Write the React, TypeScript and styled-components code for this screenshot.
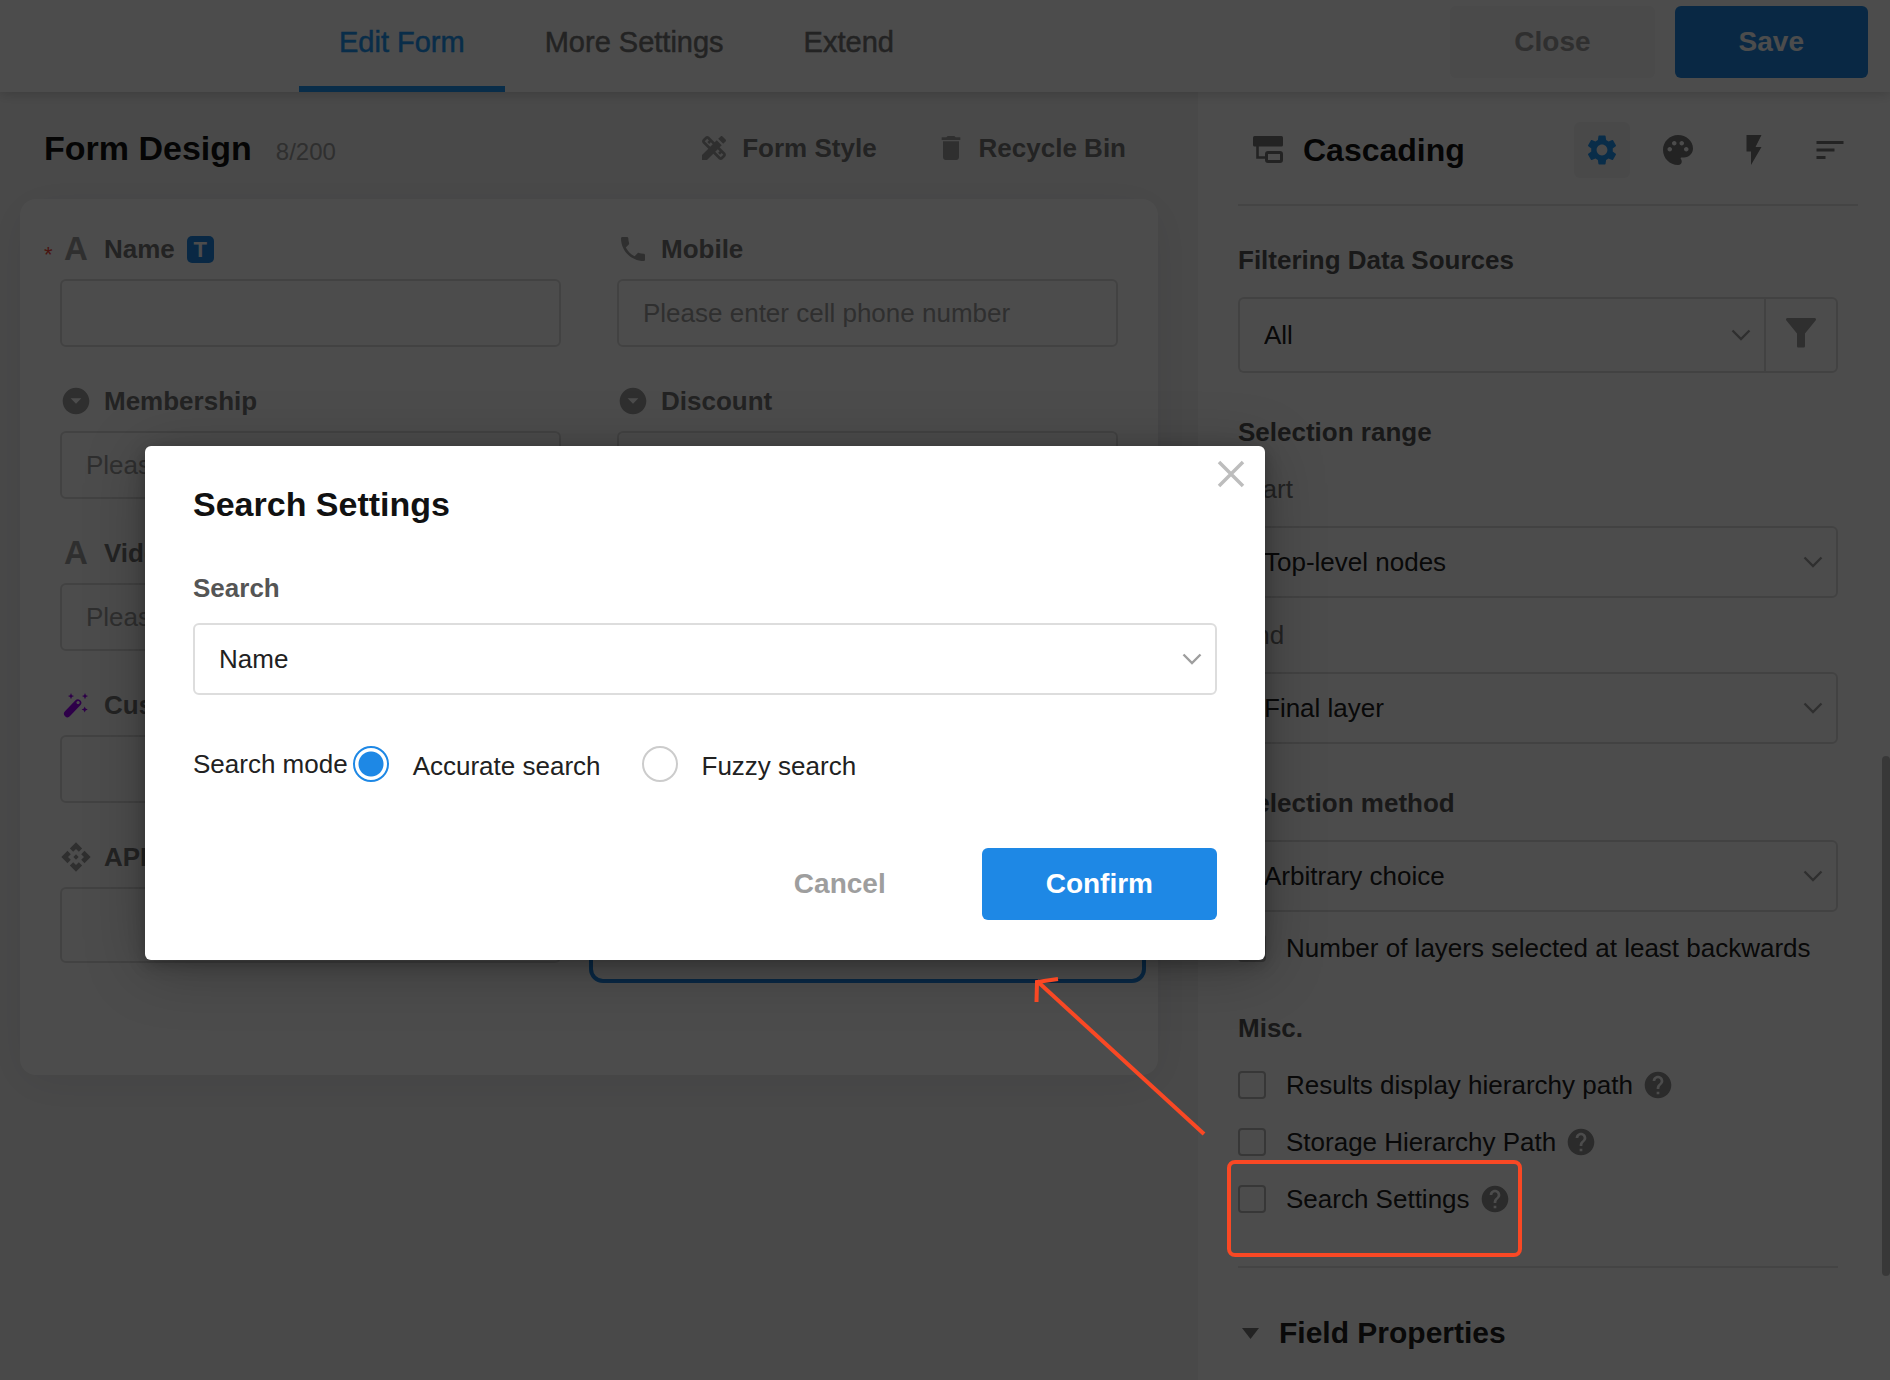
import React, { useState } from "react";
import styled, { createGlobalStyle, css } from "styled-components";
import {
  MdApi,
  MdArrowDropDownCircle,
  MdDelete,
  MdDesignServices,
  MdFlashOn,
  MdHelp,
  MdPalette,
  MdPhone,
  MdSettings,
  MdSort,
} from "react-icons/md";

const c = {
  blue: "#2196f3",
  primary: "#1e88e5",
  ink: "#111111",
  text: "#212121",
  section: "#555555",
  label: "#757575",
  muted: "#9e9e9e",
  border: "#dddddd",
  soft: "#f5f5f5",
  mark: "#f94824",
};

const GlobalStyle = createGlobalStyle`
  *, *::before, *::after { box-sizing: border-box; }
  body {
    margin: 0;
    background: #fff;
    color: ${c.text};
    font-family: "Liberation Sans", Arial, Helvetica, sans-serif;
    font-size: 26px;
    line-height: 32px;
  }
  button, input, select { font: inherit; color: inherit; margin: 0; }
  button { border: 0; background: none; padding: 0; cursor: pointer; }
  h1, h2, h3 { margin: 0; }
  svg { display: block; flex: none; }
`;

const Screen = styled.div`
  position: relative;
  display: flex;
  flex-direction: column;
  height: 100vh;
  overflow: hidden;
`;

/* Top bar */

const TopBar = styled.header`
  display: flex;
  flex: none;
  justify-content: space-between;
  align-items: flex-start;
  height: 92px;
  padding-right: 22px;
  background: #fff;
  box-shadow: 0 2px 12px rgba(0, 0, 0, 0.18);
  z-index: 1;
`;

const Tabs = styled.nav`
  display: flex;
  height: 100%;
  margin-left: 299px;
`;

const Tab = styled.a<{ $active?: boolean }>`
  display: flex;
  align-items: center;
  padding: 0 40px 2px;
  border-bottom: 6px solid ${(p) => (p.$active ? c.blue : "transparent")};
  color: ${(p) => (p.$active ? c.blue : c.label)};
  font-size: 29px;
  font-weight: 500;
  -webkit-text-stroke: 0.5px currentColor;
  text-decoration: none;
`;

const ButtonRow = styled.div<{ $gap: number }>`
  display: flex;
  justify-content: flex-end;
  gap: ${(p) => p.$gap}px;
`;

const TopActions = styled(ButtonRow)`
  padding-top: 6px;
`;

const Button = styled.button<{ $kind: "primary" | "soft" | "plain" }>`
  height: 72px;
  padding: 0 64px;
  border-radius: 6px;
  font-size: 28px;
  font-weight: 700;
  color: ${(p) => (p.$kind === "primary" ? "#fff" : c.muted)};
  ${(p) => p.$kind === "primary" && css`background: ${c.primary};`}
  ${(p) => p.$kind === "soft" && css`background: #f7f7f7;`}
`;

/* Form canvas */

const Workspace = styled.div`
  display: flex;
  flex: 1;
  min-height: 0;
`;

const Canvas = styled.main`
  flex: 1;
  min-width: 0;
  padding-right: 40px;
  padding-left: 20px;
  background: ${c.soft};
`;

const CanvasHeader = styled.div`
  display: flex;
  align-items: center;
  justify-content: space-between;
  height: 107px;
  padding: 4px 32px 0 24px;
`;

const TitleGroup = styled.div`
  display: flex;
  align-items: baseline;
  gap: 24px;
`;

const CanvasTitle = styled.h1`
  color: ${c.ink};
  font-size: 34px;
  line-height: 40px;
`;

const Counter = styled.span`
  color: ${c.muted};
  font-size: 24px;
`;

const ToolGroup = styled.div`
  display: flex;
  gap: 58px;
`;

const ToolButton = styled.button`
  display: flex;
  align-items: center;
  gap: 12px;
  color: ${c.label};
  font-weight: 700;
  svg { color: ${c.muted}; }
`;

const FormCard = styled.section`
  display: grid;
  grid-template-columns: 1fr 1fr;
  grid-auto-rows: min-content;
  gap: 24px 56px;
  min-height: 876px;
  padding: 20px 40px 112px;
  border-radius: 16px;
  background: #fff;
  box-shadow: 0 8px 48px rgba(20, 20, 60, 0.08);
`;

const FieldBox = styled.div<{ $column: number }>`
  display: flex;
  flex-direction: column;
  grid-column: ${(p) => p.$column};
`;

const FieldLabel = styled.label`
  position: relative;
  display: flex;
  align-items: center;
  gap: 12px;
  height: 60px;
  color: ${c.label};
  font-weight: 700;
`;

const FieldIcon = styled.span`
  display: flex;
  justify-content: center;
  width: 32px;
  color: ${c.muted};
`;

const LetterIcon = styled.span`
  font-size: 33px;
`;

const Required = styled.span`
  position: absolute;
  top: 20px;
  left: -16px;
  color: #f44336;
  font-size: 22px;
  font-weight: 400;
`;

const TypeBadge = styled.span`
  display: grid;
  place-items: center;
  width: 27px;
  height: 27px;
  border-radius: 5px;
  background: ${c.primary};
  color: #fff;
  font-size: 22px;
  line-height: 27px;
`;

const TextInput = styled.input<{ $tall?: boolean }>`
  width: 100%;
  height: ${(p) => (p.$tall ? 76 : 68)}px;
  padding: 0 24px;
  border: 2px solid ${c.border};
  border-radius: 6px;
  background: #fff;
  outline: 0;
  &::placeholder { color: ${c.muted}; opacity: 1; }
`;

const SelectedCell = styled.div`
  grid-row: 5;
  grid-column: 2;
  margin: 0 -28px -20px;
  border: 4px solid ${c.primary};
  border-radius: 14px;
`;

/* Property panel */

const Panel = styled.aside`
  position: relative;
  flex: none;
  width: 692px;
  padding-left: 40px;
  background: #fff;
`;

const PanelHeader = styled.div`
  display: flex;
  align-items: center;
  justify-content: space-between;
  height: 114px;
  margin-right: 32px;
  padding: 3px 0 0 15px;
  border-bottom: 2px solid #e4e4e4;
`;

const PanelTitle = styled.h2`
  display: flex;
  align-items: center;
  gap: 20px;
  color: ${c.ink};
  font-size: 32px;
  svg { color: ${c.label}; }
`;

const IconTabs = styled.div`
  display: flex;
  gap: 20px;
`;

const IconTab = styled.button<{ $active?: boolean }>`
  display: grid;
  place-items: center;
  width: 56px;
  height: 56px;
  border-radius: 6px;
  color: ${(p) => (p.$active ? c.blue : c.label)};
  background: ${(p) => (p.$active ? c.soft : "transparent")};
`;

const PanelBody = styled.div`
  display: flex;
  flex-direction: column;
  margin-right: 52px;
  padding-top: 38px;
`;

const SectionTitle = styled.label<{ $top?: number; $bottom?: number }>`
  margin-top: ${(p) => p.$top ?? 0}px;
  margin-bottom: ${(p) => p.$bottom ?? 21}px;
  color: ${c.section};
  font-size: 26px;
  font-weight: 700;
`;

const SectionHeading = styled.h3<{ $top: number; $bottom: number }>`
  margin-top: ${(p) => p.$top}px;
  margin-bottom: ${(p) => p.$bottom}px;
  color: ${c.section};
  font-size: 26px;
`;

const SubLabel = styled.label`
  margin-bottom: 21px;
  color: ${c.label};
`;

const SelectShell = styled.div`
  position: relative;
  flex: 1;
  display: flex;
  min-height: 72px;
  border: 2px solid ${c.border};
  border-radius: 6px;
  background: #fff;
  & > svg {
    position: absolute;
    top: calc(50% - 6px);
    right: 13px;
    color: ${c.muted};
    pointer-events: none;
  }
`;

const NativeSelect = styled.select`
  width: 100%;
  padding: 0 56px 0 24px;
  border: 0;
  border-radius: 6px;
  outline: 0;
  background: transparent;
  appearance: none;
`;

const RangeSelect = styled.div`
  display: flex;
  margin-bottom: 21px;
`;

const FilterGroup = styled.div`
  display: flex;
  height: 76px;
  ${SelectShell} {
    border-right: 0;
    border-radius: 6px 0 0 6px;
  }
`;

const FilterButton = styled.button`
  display: grid;
  place-items: center;
  width: 74px;
  padding-bottom: 4px;
  border: 2px solid ${c.border};
  border-radius: 0 6px 6px 0;
  color: ${c.muted};
`;

const CheckList = styled.div`
  display: flex;
  flex-direction: column;
  gap: 25px;
`;

const CheckRow = styled.label`
  display: flex;
  align-items: center;
`;

const CheckBox = styled.input`
  appearance: none;
  flex: none;
  width: 28px;
  height: 28px;
  margin-right: 20px;
  border: 2px solid #b8b8b8;
  border-radius: 4px;
  background: #fff;
`;

const HelpIcon = styled.span`
  display: flex;
  margin-left: 9px;
  color: #909090;
`;

const CheckRowSpaced = styled(CheckRow)`
  margin-top: 20px;
`;

const GroupHeader = styled.button`
  display: flex;
  align-items: center;
  gap: 20px;
  margin-top: 51px;
  padding: 49px 0 0 4px;
  border-top: 2px solid #e4e4e4;
  color: ${c.text};
  font-size: 30px;
  font-weight: 700;
  svg { color: ${c.label}; }
`;

const ScrollThumb = styled.div`
  position: absolute;
  top: 664px;
  right: 0;
  width: 8px;
  height: 520px;
  border-radius: 4px;
  background: #bdbdbd;
`;

/* Dialog */

const Backdrop = styled.div`
  position: absolute;
  inset: 0;
  padding: 446px 0 0 145px;
  background: rgba(0, 0, 0, 0.7);
  z-index: 2;
`;

const Dialog = styled.div`
  position: relative;
  display: flex;
  flex-direction: column;
  width: 1120px;
  padding: 38px 48px 40px;
  border-radius: 6px;
  background: #fff;
  box-shadow: 0 4px 16px rgba(0, 0, 0, 0.26), 0 8px 60px rgba(0, 0, 0, 0.26);
`;

const CloseIcon = styled.button`
  position: absolute;
  top: 14px;
  right: 20px;
  color: #bdbdbd;
`;

const DialogTitle = styled.h2`
  margin-bottom: 48px;
  color: ${c.ink};
  font-size: 34px;
  line-height: 40px;
`;

const RadioRow = styled.fieldset`
  display: flex;
  align-items: center;
  margin: 51px 0 66px;
  padding: 0;
  border: 0;
`;

const RadioOption = styled.label`
  display: flex;
  align-items: center;
  gap: 24px;
  margin-right: 41px;
`;

const RadioText = styled.span`
  padding-top: 3px;
`;

const RadioTitle = styled.span`
  margin-right: 5px;
`;

const Radio = styled.input`
  appearance: none;
  width: 36px;
  height: 36px;
  border: 2px solid #cccccc;
  border-radius: 50%;
  background: #fff;
  &:checked {
    border-color: ${c.primary};
    background: radial-gradient(circle, ${c.primary} 12px, #fff 13px);
  }
`;

/* Tutorial marks drawn over the page */

const MarkBox = styled.div`
  position: absolute;
  top: 1160px;
  right: 368px;
  width: 295px;
  height: 97px;
  border: 4px solid ${c.mark};
  border-radius: 8px;
  pointer-events: none;
  z-index: 3;
`;

const MarkArrow = styled.svg`
  position: absolute;
  top: 970px;
  left: 1025px;
  pointer-events: none;
  z-index: 3;
`;

const Chevron = () => (
  <svg width="20" height="12" viewBox="0 0 20 12" fill="none" stroke="currentColor" strokeWidth="2.400">
    <path d="M1.500 1.500 10 10l8.500-8.500" />
  </svg>
);

const CascadeIcon = () => (
  <svg width="30" height="28" viewBox="0 0 30 28" fill="none" stroke="currentColor" strokeWidth="3">
    <rect x="0" y="0" width="30" height="10.500" rx="1.500" fill="currentColor" stroke="none" />
    <path d="M4.500 10V21.500H13" strokeWidth="2.600" />
    <rect x="13.500" y="16.500" width="15" height="9" rx="1.500" />
  </svg>
);

const FunnelIcon = () => (
  <svg width="30" height="30" viewBox="0 0 30 30" fill="currentColor">
    <path d="M1.500 0h27c1.300 0 2 1.500 1.100 2.500L19 15.500V28c0 1-.6 1.600-1.500 1.600h-5c-.9 0-1.500-.6-1.500-1.600V15.500L.4 2.500C-.5 1.500.2 0 1.500 0Z" />
  </svg>
);

const WandIcon = () => (
  <svg width="28" height="28" viewBox="0 0 28 28" fill="#9a00f4">
    <path d="M9 2l.9 2.200 2.200.9-2.200.9L9 8.200 8.100 6l-2.200-.9 2.200-.9zM23 2l.9 2.200 2.200.9-2.200.9-.9 2.200-.9-2.200-2.200-.9 2.200-.9zM22.700 15.400l.9 2.200 2.200.9-2.200.9-.9 2.200-.9-2.200-2.200-.9 2.200-.9z" />
    <path d="M5.500 22.700 15.800 11.900" stroke="#9a00f4" strokeWidth="7" strokeLinecap="round" />
    <circle cx="16.100" cy="11.600" r="1.600" fill="#fff" />
  </svg>
);

const CrossIcon = () => (
  <svg width="28" height="28" viewBox="0 0 28 28" stroke="currentColor" strokeWidth="3.500">
    <path d="M2 2l24 24M26 2 2 26" />
  </svg>
);

const CaretIcon = () => (
  <svg width="17" height="11" viewBox="0 0 17 11" fill="currentColor">
    <path d="M0 0h17L8.500 11z" />
  </svg>
);

const Letter = () => <LetterIcon aria-hidden="true">A</LetterIcon>;

interface FieldProps {
  id: string;
  label: string;
  icon: React.ReactNode;
  placeholder?: string;
  required?: boolean;
  badge?: string;
  tall?: boolean;
  column?: number;
}

const Field = ({ id, label, icon, placeholder, required, badge, tall, column = 1 }: FieldProps) => (
  <FieldBox $column={column}>
    <FieldLabel htmlFor={id}>
      {required && <Required>*</Required>}
      <FieldIcon>{icon}</FieldIcon>
      {label}
      {badge && <TypeBadge>{badge}</TypeBadge>}
    </FieldLabel>
    <TextInput id={id} placeholder={placeholder} $tall={tall} />
  </FieldBox>
);

const Select = ({ id, option }: { id: string; option: string }) => (
  <SelectShell>
    <NativeSelect id={id}>
      <option>{option}</option>
    </NativeSelect>
    <Chevron />
  </SelectShell>
);

const fields: FieldProps[] = [
  { id: "name", label: "Name", icon: <Letter />, required: true, badge: "T" },
  { id: "mobile", label: "Mobile", icon: <MdPhone size={32} />, placeholder: "Please enter cell phone number", column: 2 },
  { id: "membership", label: "Membership", icon: <MdArrowDropDownCircle size={32} />, placeholder: "Please select" },
  { id: "discount", label: "Discount", icon: <MdArrowDropDownCircle size={32} />, column: 2 },
  { id: "video", label: "Video", icon: <Letter />, placeholder: "Please enter" },
  { id: "custom", label: "Custom", icon: <WandIcon /> },
  { id: "api", label: "API", icon: <MdApi size={32} />, tall: true },
];

const miscOptions = ["Results display hierarchy path", "Storage Hierarchy Path", "Search Settings"];

export default function App() {
  const [mode, setMode] = useState("Accurate search");

  return (
    <>
      <GlobalStyle />
      <Screen>
        <TopBar>
          <Tabs>
            <Tab href="#edit" $active>Edit Form</Tab>
            <Tab href="#settings">More Settings</Tab>
            <Tab href="#extend">Extend</Tab>
          </Tabs>
          <TopActions $gap={20}>
            <Button $kind="soft">Close</Button>
            <Button $kind="primary">Save</Button>
          </TopActions>
        </TopBar>

        <Workspace>
          <Canvas>
            <CanvasHeader>
              <TitleGroup>
                <CanvasTitle>Form Design</CanvasTitle>
                <Counter>8/200</Counter>
              </TitleGroup>
              <ToolGroup>
                <ToolButton><MdDesignServices size={32} />Form Style</ToolButton>
                <ToolButton><MdDelete size={32} />Recycle Bin</ToolButton>
              </ToolGroup>
            </CanvasHeader>
            <FormCard>
              {fields.map((f) => <Field key={f.id} {...f} />)}
              <SelectedCell />
            </FormCard>
          </Canvas>

          <Panel>
            <PanelHeader>
              <PanelTitle><CascadeIcon />Cascading</PanelTitle>
              <IconTabs>
                <IconTab $active aria-label="Settings"><MdSettings size={36} /></IconTab>
                <IconTab aria-label="Style"><MdPalette size={36} /></IconTab>
                <IconTab aria-label="Events"><MdFlashOn size={36} /></IconTab>
                <IconTab aria-label="Order"><MdSort size={36} /></IconTab>
              </IconTabs>
            </PanelHeader>
            <PanelBody>
              <SectionTitle htmlFor="source">Filtering Data Sources</SectionTitle>
              <FilterGroup>
                <Select id="source" option="All" />
                <FilterButton aria-label="Filter"><FunnelIcon /></FilterButton>
              </FilterGroup>

              <SectionHeading $top={43} $bottom={25}>Selection range</SectionHeading>
              <SubLabel htmlFor="start">Start</SubLabel>
              <RangeSelect><Select id="start" option="Top-level nodes" /></RangeSelect>
              <SubLabel htmlFor="end">End</SubLabel>
              <Select id="end" option="Final layer" />

              <SectionTitle htmlFor="method" $top={43}>Selection method</SectionTitle>
              <Select id="method" option="Arbitrary choice" />
              <CheckRowSpaced>
                <CheckBox type="checkbox" />
                Number of layers selected at least backwards
              </CheckRowSpaced>

              <SectionHeading $top={48} $bottom={25}>Misc.</SectionHeading>
              <CheckList>
                {miscOptions.map((o) => (
                  <CheckRow key={o}>
                    <CheckBox type="checkbox" />
                    {o}
                    <HelpIcon><MdHelp size={32} /></HelpIcon>
                  </CheckRow>
                ))}
              </CheckList>

              <GroupHeader><CaretIcon />Field Properties</GroupHeader>
            </PanelBody>
            <ScrollThumb />
          </Panel>
        </Workspace>

        <Backdrop>
          <Dialog role="dialog" aria-labelledby="dialog-title">
            <CloseIcon aria-label="Close dialog"><CrossIcon /></CloseIcon>
            <DialogTitle id="dialog-title">Search Settings</DialogTitle>
            <SectionTitle htmlFor="search" $bottom={19}>Search</SectionTitle>
            <Select id="search" option="Name" />
            <RadioRow>
              <RadioTitle>Search mode</RadioTitle>
              {["Accurate search", "Fuzzy search"].map((m) => (
                <RadioOption key={m}>
                  <Radio type="radio" name="mode" checked={mode === m} onChange={() => setMode(m)} />
                  <RadioText>{m}</RadioText>
                </RadioOption>
              ))}
            </RadioRow>
            <ButtonRow $gap={32}>
              <Button $kind="plain">Cancel</Button>
              <Button $kind="primary">Confirm</Button>
            </ButtonRow>
          </Dialog>
        </Backdrop>

        <MarkArrow width="184" height="170" viewBox="0 0 184 170" fill="none" stroke={c.mark} strokeWidth="4">
          <path d="M179 164 12 11" />
          <path d="M33 9 12 12 11.500 32" />
        </MarkArrow>
        <MarkBox />
      </Screen>
    </>
  );
}
